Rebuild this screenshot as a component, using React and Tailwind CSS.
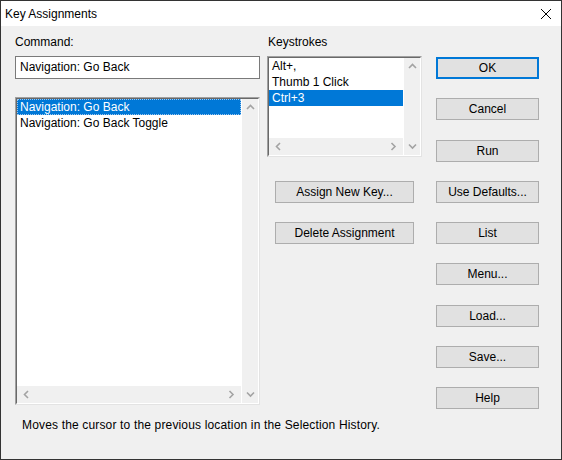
import React from 'react';

const Chevron = ({ dir }) => {
    const paths = {
        up: 'M1 5 L4.5 1.5 L8 5',
        down: 'M1 1.5 L4.5 5 L8 1.5',
        left: 'M5 1 L1.5 4.5 L5 8',
        right: 'M1.5 1 L5 4.5 L1.5 8',
    };
    const vertical = dir === 'up' || dir === 'down';
    return (
        <svg
            width={vertical ? 9 : 7}
            height={vertical ? 7 : 9}
            viewBox={vertical ? '0 0 9 7' : '0 0 7 9'}
            className="block"
        >
            <path d={paths[dir]} fill="none" stroke="#a3a3a3" strokeWidth="1.6" />
        </svg>
    );
};

const VScroll = () => (
    <div className="w-[17px] bg-[#f0f0f0] border-l border-white flex flex-col justify-between items-center py-[5px]">
        <Chevron dir="up" />
        <Chevron dir="down" />
    </div>
);

const HScroll = () => (
    <div className="h-[17px] bg-[#f0f0f0] flex items-center justify-between px-[6px]">
        <Chevron dir="left" />
        <Chevron dir="right" />
    </div>
);

const ListBox = ({ items, selected, focused, className }) => (
    <div className={`border border-t-[#a0a0a0] border-l-[#a0a0a0] border-b-[#e3e3e3] border-r-[#e3e3e3] ${className}`}>
        <div className="h-full border border-t-[#696969] border-l-[#696969] border-b-white border-r-white flex">
            <div className="flex-1 flex flex-col min-w-0">
                <div className="flex-1 bg-white">
                    {items.map((item, i) => (
                        <div
                            key={item}
                            className={`h-[16px] leading-[16px] pl-[3px] whitespace-nowrap ${i === selected
                                ? `bg-[#0078d7] text-white ${focused ? 'outline-1 outline-dotted outline-[#9cc6ee] -outline-offset-1' : ''}`
                                : 'text-black'
                                }`}
                        >
                            {item}
                        </div>
                    ))}
                </div>
                <HScroll />
            </div>
            <VScroll />
        </div>
    </div>
);

const Button = ({ children, primary, className = '' }) => (
    <button
        className={`h-[22px] w-full bg-[#e1e1e1] text-black text-[12px] leading-none ${primary ? 'border-2 border-[#0078d7]' : 'border border-[#adadad]'
            } ${className}`}
    >
        {children}
    </button>
);

const rightButtons = [
    { label: 'OK', primary: true },
    { label: 'Cancel' },
    { label: 'Run', extra: 'mt-[1px]' },
    { label: 'Use Defaults...' },
    { label: 'List' },
    { label: 'Menu...' },
    { label: 'Load...', extra: 'mt-[1px]' },
    { label: 'Save...' },
    { label: 'Help' },
];

export default function App() {
    return (
        <div className="w-[562px] h-[460px] border border-[#333333] flex flex-col font-['Liberation_Sans',Arial,sans-serif] text-[12px] text-black">
            {/* Title bar */}
            <div className="h-[25px] bg-white flex items-center justify-between pl-[4px] pr-[9px]">
                <span>Key Assignments</span>
                <svg width="12" height="12" viewBox="0 0 12 12">
                    <path d="M1 1 L11 11 M11 1 L1 11" stroke="#000" strokeWidth="1" />
                </svg>
            </div>

            {/* Body */}
            <div className="flex-1 bg-[#f0f0f0] flex pl-[14px]">
                <div className="w-[245px] flex flex-col">
                    <div className="mt-[9px] leading-[15px]">Command:</div>
                    <div className="mt-[6px] h-[23px] border border-[#7a7a7a] bg-white pl-[4px] leading-[21px]">
                        Navigation: Go Back
                    </div>
                    <ListBox
                        className="mt-[18px] h-[308px]"
                        items={['Navigation: Go Back', 'Navigation: Go Back Toggle']}
                        selected={0}
                        focused
                    />
                    <div className="mt-[13px] pl-[7px] leading-[15px] whitespace-nowrap tracking-[0.16px]">
                        Moves the cursor to the previous location in the Selection History.
                    </div>
                </div>

                <div className="ml-[7px] w-[155px] flex flex-col">
                    <div className="mt-[9px] pl-[1px] leading-[15px]">Keystrokes</div>
                    <ListBox
                        className="mt-[6px] h-[101px]"
                        items={['Alt+,', 'Thumb 1 Click', 'Ctrl+3']}
                        selected={2}
                    />
                    <div className="ml-[8px] w-[139px] mt-[24px] flex flex-col gap-[19px]">
                        <Button>Assign New Key...</Button>
                        <Button>Delete Assignment</Button>
                    </div>
                </div>

                <div className="ml-[14px] w-[103px] mt-[31px] flex flex-col gap-[19px]">
                    {rightButtons.map((b) => (
                        <Button key={b.label} primary={b.primary} className={b.extra || ''}>
                            {b.label}
                        </Button>
                    ))}
                </div>
            </div>
        </div>
    );
}
